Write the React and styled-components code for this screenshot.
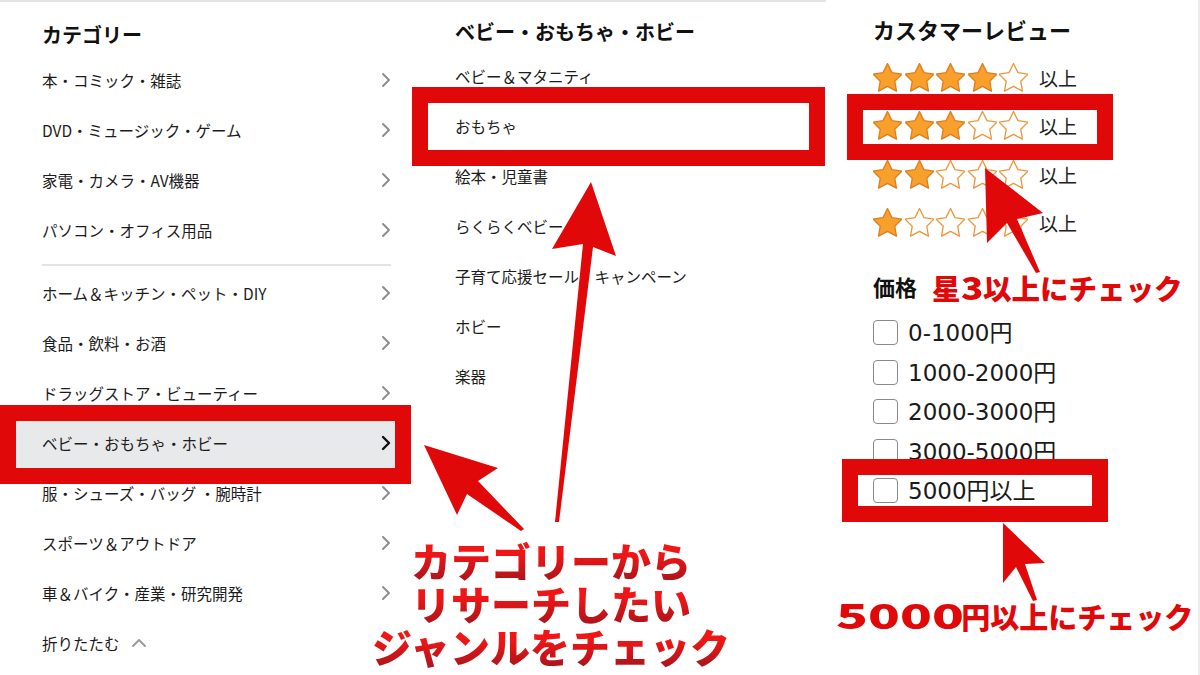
import styled, { createGlobalStyle } from 'styled-components'

var RED = '#e00808'

var GlobalStyle = createGlobalStyle`
  body {
    margin: 0;
    background: #fff;
    font-family: "Noto Sans CJK JP", "Noto Sans", sans-serif;
  }
`

var Page = styled.div`
  position: relative;
  width: 1200px;
  height: 675px;
  display: flex;
  background: #fff;
  overflow: hidden;
  color: #161616;
`

var Panel = styled.section`
  box-sizing: border-box;
  width: ${({ $w }) => $w}px;
  flex: ${({ $w }) => ($w ? 'none' : '1')};
  border-top: ${({ $top }) => ($top ? '2px solid #e2e4e6' : 'none')};
  border-right: ${({ $edge }) => ($edge ? '2px solid #ececec' : 'none')};
  padding-left: ${({ $pad }) => $pad}px;
  padding-right: ${({ $padR }) => $padR || 0}px;
  display: flex;
  flex-direction: column;
`

var Heading = styled.h2`
  margin: 0;
  box-sizing: border-box;
  height: ${({ $h }) => $h}px;
  padding-top: ${({ $pt }) => $pt}px;
  font-size: ${({ $size }) => $size || 20}px;
  line-height: ${({ $size }) => $size || 20}px;
  font-weight: 700;
  color: #111;
  white-space: nowrap;
`

var CatRow = styled.div`
  box-sizing: border-box;
  height: 50px;
  margin: 0 -20px 0 -42px;
  padding: 0 20px 5px 42px;
  display: flex;
  align-items: center;
  justify-content: space-between;
  font-size: 15.5px;
  color: #1c1c1c;
  background: ${({ $active }) => ($active ? '#e8e9ea' : 'transparent')};
`

var Divider = styled.hr`
  border: none;
  height: 2px;
  background: #e3e3e3;
  margin: 7px 0 4px;
`

var Fold = styled.div`
  box-sizing: border-box;
  height: 50px;
  padding-bottom: 5px;
  display: flex;
  align-items: center;
  gap: 11px;
  font-size: 15.5px;
  color: #1c1c1c;
`

var SubRow = styled.div`
  box-sizing: border-box;
  height: 50px;
  padding-bottom: 4px;
  display: flex;
  align-items: center;
  font-size: 15.5px;
  color: #1c1c1c;
  white-space: nowrap;
`

var StarRow = styled.div`
  height: 48.5px;
  display: flex;
  align-items: center;
`

var Stars = styled.div`
  display: flex;
  gap: 2.5px;
`

var AndUp = styled.span`
  margin-left: 11px;
  font-size: 19px;
  color: #222;
`

var PriceHead = styled.div`
  box-sizing: border-box;
  height: 66px;
  padding-top: 19px;
  display: flex;
  align-items: flex-start;
  gap: 15px;
`

var PriceTitle = styled.span`
  font-size: 22px;
  line-height: 40px;
  font-weight: 700;
  color: #111;
`

var Note = styled.span`
  font-size: 28.5px;
  line-height: 40px;
  font-weight: 900;
  color: ${RED};
  white-space: nowrap;
`

var WideNum = styled.span`
  display: inline-block;
  font-size: ${({ $size }) => $size}px;
  transform: scaleX(${({ $scale }) => $scale});
  transform-origin: 0 50%;
  margin-right: ${({ $after }) => $after}px;
`

var CheckRow = styled.label`
  box-sizing: border-box;
  height: 39.5px;
  padding-bottom: 3px;
  display: flex;
  align-items: center;
  gap: 10px;
`

var Box = styled.span`
  box-sizing: border-box;
  width: 25px;
  height: 25px;
  margin-top: 3px;
  border: 1.5px solid #8a8a8a;
  border-radius: 4px;
  background: #fff;
`

var PriceText = styled.span`
  font-family: "DejaVu Sans", "Noto Sans CJK JP", sans-serif;
  font-size: 23px;
  color: #1a1a1a;
  white-space: nowrap;
`

var Callout = styled.div`
  position: absolute;
  box-sizing: border-box;
  left: ${({ $x }) => $x}px;
  top: ${({ $y }) => $y}px;
  width: ${({ $w }) => $w}px;
  height: ${({ $h }) => $h}px;
  border: 16px solid ${RED};
  pointer-events: none;
`

var Arrows = styled.svg`
  position: absolute;
  left: 0;
  top: 0;
  pointer-events: none;
`

var BigNote = styled.div`
  position: absolute;
  left: 351px;
  top: 539px;
  width: 400px;
  text-align: center;
  font-size: 40px;
  line-height: 43px;
  font-weight: 900;
`

var NoteLine = styled.span`
  display: block;
  white-space: nowrap;
  background: linear-gradient(180deg, #f01616 35%, #a8141c 100%);
  -webkit-background-clip: text;
  background-clip: text;
  color: transparent;
`

var BottomNote = styled.div`
  position: absolute;
  left: 836px;
  top: 594px;
  font-size: 29px;
  line-height: 40px;
  font-weight: 900;
  color: ${RED};
  white-space: nowrap;
`

function Chevron({ $dark }) {
  return (
    <svg width="10" height="16" viewBox="0 0 10 16">
      <polyline
        points="2,2 8,8 2,14"
        fill="none"
        stroke={$dark ? '#111' : '#8e8e8e'}
        strokeWidth={$dark ? 2.4 : 2}
        strokeLinecap="round"
        strokeLinejoin="round"
      />
    </svg>
  )
}

function Star({ on }) {
  return (
    <svg width="29" height="29" viewBox="2 1.6 20 20">
      <polygon
        points="12,2 15.09,8.26 22,9.27 17,14.14 18.18,21.02 12,17.77 5.82,21.02 7,14.14 2,9.27 8.91,8.26"
        fill={on ? '#f7a02b' : '#fff'}
        stroke={on ? '#df7d1b' : '#ec963a'}
        strokeWidth="0.9"
        strokeLinejoin="round"
      />
    </svg>
  )
}

var categories = [
  '本・コミック・雑誌',
  'DVD・ミュージック・ゲーム',
  '家電・カメラ・AV機器',
  'パソコン・オフィス用品',
]

var moreCategories = [
  'ホーム＆キッチン・ペット・DIY',
  '食品・飲料・お酒',
  'ドラッグストア・ビューティー',
  'ベビー・おもちゃ・ホビー',
  '服・シューズ・バッグ ・腕時計',
  'スポーツ＆アウトドア',
  '車＆バイク・産業・研究開発',
]

var subCategories = [
  'ベビー＆マタニティ',
  'おもちゃ',
  '絵本・児童書',
  'らくらくベビー',
  '子育て応援セール・キャンペーン',
  'ホビー',
  '楽器',
]

var prices = ['0-1000円', '1000-2000円', '2000-3000円', '3000-5000円', '5000円以上']

export default function App() {
  return (
    <>
      <GlobalStyle />
      <Page>
        <Panel $w={411} $top $pad={42} $padR={20}>
          <Heading $h={55} $pt={23}>カテゴリー</Heading>
          {categories.map((c) => (
            <CatRow key={c}>
              {c}
              <Chevron />
            </CatRow>
          ))}
          <Divider />
          {moreCategories.map((c) => {
            var active = c === 'ベビー・おもちゃ・ホビー'
            return (
              <CatRow key={c} $active={active}>
                {c}
                <Chevron $dark={active} />
              </CatRow>
            )
          })}
          <Fold>
            折りたたむ
            <svg width="16" height="10" viewBox="0 0 16 10">
              <polyline
                points="2,8 8,2 14,8"
                fill="none"
                stroke="#9a9a9a"
                strokeWidth="2"
                strokeLinecap="round"
                strokeLinejoin="round"
              />
            </svg>
          </Fold>
        </Panel>

        <Panel $w={415} $top $pad={44}>
          <Heading $h={51} $pt={20}>ベビー・おもちゃ・ホビー</Heading>
          {subCategories.map((s) => (
            <SubRow key={s}>{s}</SubRow>
          ))}
        </Panel>

        <Panel $edge $pad={47}>
          <Heading $h={53} $pt={18} $size={22}>カスタマーレビュー</Heading>
          {[4, 3, 2, 1].map((n) => (
            <StarRow key={n}>
              <Stars>
                {[0, 1, 2, 3, 4].map((i) => (
                  <Star key={i} on={i < n} />
                ))}
              </Stars>
              <AndUp>以上</AndUp>
            </StarRow>
          ))}
          <PriceHead>
            <PriceTitle>価格</PriceTitle>
            <Note>
              星<WideNum $size={32} $scale={1.15} $after={3}>3</WideNum>以上にチェック
            </Note>
          </PriceHead>
          {prices.map((p) => (
            <CheckRow key={p}>
              <Box />
              <PriceText>{p}</PriceText>
            </CheckRow>
          ))}
        </Panel>

        <Callout $x={0} $y={405} $w={411} $h={79} />
        <Callout $x={412} $y={87} $w={413} $h={79} />
        <Callout $x={847} $y={94} $w={266} $h={66} />
        <Callout $x={842} $y={459} $w={266} $h={63} />

        <Arrows width="1200" height="675" viewBox="0 0 1200 675">
          <polygon
            fill={RED}
            points="591,182 616,256 593,247 559,522 555,522 583,244 552,249"
          />
          <polygon
            fill={RED}
            points="424,445 498,468 478,481 524,529 521,531 467,494 457,515"
          />
          <polygon
            fill={RED}
            points="985,168 1043,213 1017,219 1040,272 1036,273 1007,223 987,243"
          />
          <polygon
            fill={RED}
            points="1003,523 1045,563 1025,564 1037,600 1033,601 1016,567 1003,583"
          />
        </Arrows>

        <BigNote>
          <NoteLine>カテゴリーから</NoteLine>
          <NoteLine>リサーチしたい</NoteLine>
          <NoteLine>ジャンルをチェック</NoteLine>
        </BigNote>

        <BottomNote>
          <WideNum $size={35} $scale={1.5} $after={40}>5000</WideNum>円以上にチェック
        </BottomNote>
      </Page>
    </>
  )
}
